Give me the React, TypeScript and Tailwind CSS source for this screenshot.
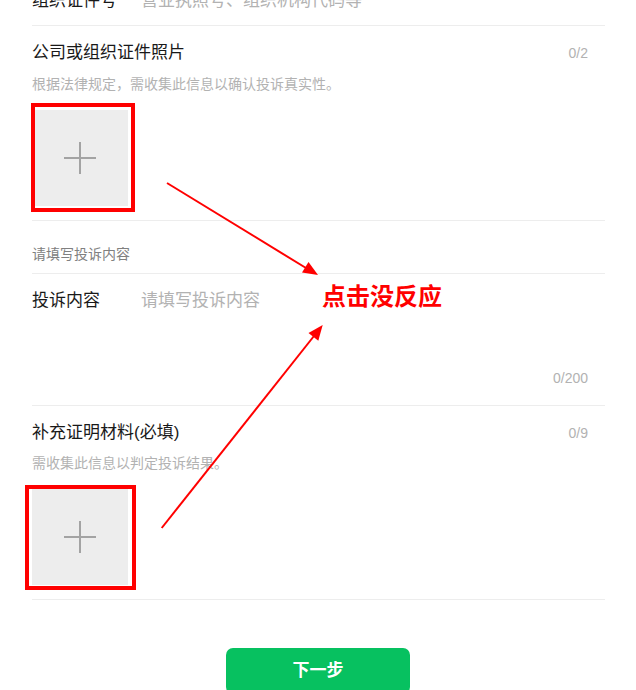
import React from 'react';

function UploadBox() {
  return (
    <div className="w-[96px] h-[96px] bg-[#ededed] flex items-center justify-center">
      <svg width="32" height="32" viewBox="0 0 32 32">
        <path d="M0 16H32M16 0V32" stroke="#a3a3a3" strokeWidth="2" />
      </svg>
    </div>
  );
}

function UploadSection({ title, count, desc, className }: { title: string; count: string; desc: string; className: string }) {
  return (
    <div className={`border-b border-[#ededed] pr-[17px] ${className}`}>
      <div className="flex items-center justify-between h-[24px]">
        <span className="text-[17px] text-[#191919]">{title}</span>
        <span className="text-[14px] text-[#b2b2b2]">{count}</span>
      </div>
      <p className="text-[14px] leading-[20px] text-[#b2b2b2]">{desc}</p>
      <UploadBox />
    </div>
  );
}

export default function App() {
  return (
    <div
      className="relative min-h-[690px] overflow-hidden bg-white"
      style={{ fontFamily: '"Liberation Sans", "Noto Sans CJK SC", sans-serif' }}
    >
      <div className="ml-[32px] mr-[31px]">
        {/* cut-off row at the top */}
        <div className="-mt-[23px] h-[49px] flex items-center border-b border-[#ededed] text-[17px]">
          <span className="w-[109px] text-[#191919]">组织证件号</span>
          <span className="text-[#b2b2b2]">营业执照号、组织机构代码等</span>
        </div>

        <UploadSection
          title="公司或组织证件照片"
          count="0/2"
          desc="根据法律规定，需收集此信息以确认投诉真实性。"
          className="pt-[15px] pb-[14px] [&>p]:mt-[9px] [&>p]:mb-[16px]"
        />

        <div className="pt-[23px] pb-[9px] border-b border-[#ededed] text-[14px] leading-[20px] text-[#808080]">
          请填写投诉内容
        </div>

        <div className="pt-[15px] pb-[17px] pr-[17px] border-b border-[#ededed]">
          <div className="flex">
            <span className="w-[109px] shrink-0 text-[17px] leading-[24px] text-[#191919]">投诉内容</span>
            <textarea
              className="flex-1 h-[72px] resize-none outline-none text-[17px] leading-[24px] text-[#191919] placeholder:text-[#b2b2b2]"
              placeholder="请填写投诉内容"
            />
          </div>
          <div className="mt-[7px] text-right text-[14px] leading-[20px] text-[#b2b2b2]">0/200</div>
        </div>

        <UploadSection
          title="补充证明材料(必填)"
          count="0/9"
          desc="需收集此信息以判定投诉结果。"
          className="pt-[15px] pb-[14px] [&>p]:mt-[8px] [&>p]:mb-[16px]"
        />
      </div>

      <div className="flex justify-center mt-[48px]">
        <button className="w-[184px] h-[46px] rounded-[7px] bg-[#07c160] text-white text-[17px] font-bold">
          下一步
        </button>
      </div>

      {/* annotations drawn over the page */}
      <svg className="absolute inset-0 pointer-events-none" width="636" height="690">
        <rect x="33" y="105" width="100" height="105" fill="none" stroke="#ff0000" strokeWidth="4" />
        <rect x="27" y="487" width="107" height="101" fill="none" stroke="#ff0000" strokeWidth="4" />
        <line x1="167" y1="183" x2="306" y2="268" stroke="#ff0000" strokeWidth="2" />
        <polygon points="318,275 302,272.5 308.5,262" fill="#ff0000" />
        <line x1="161.7" y1="528" x2="314" y2="336" stroke="#ff0000" strokeWidth="2" />
        <polygon points="322.7,325 318.3,340.7 308.5,333" fill="#ff0000" />
      </svg>
      <div className="absolute left-[322px] top-[282px] text-[24px] leading-[30px] font-bold text-[#ff0000]">
        点击没反应
      </div>
    </div>
  );
}
